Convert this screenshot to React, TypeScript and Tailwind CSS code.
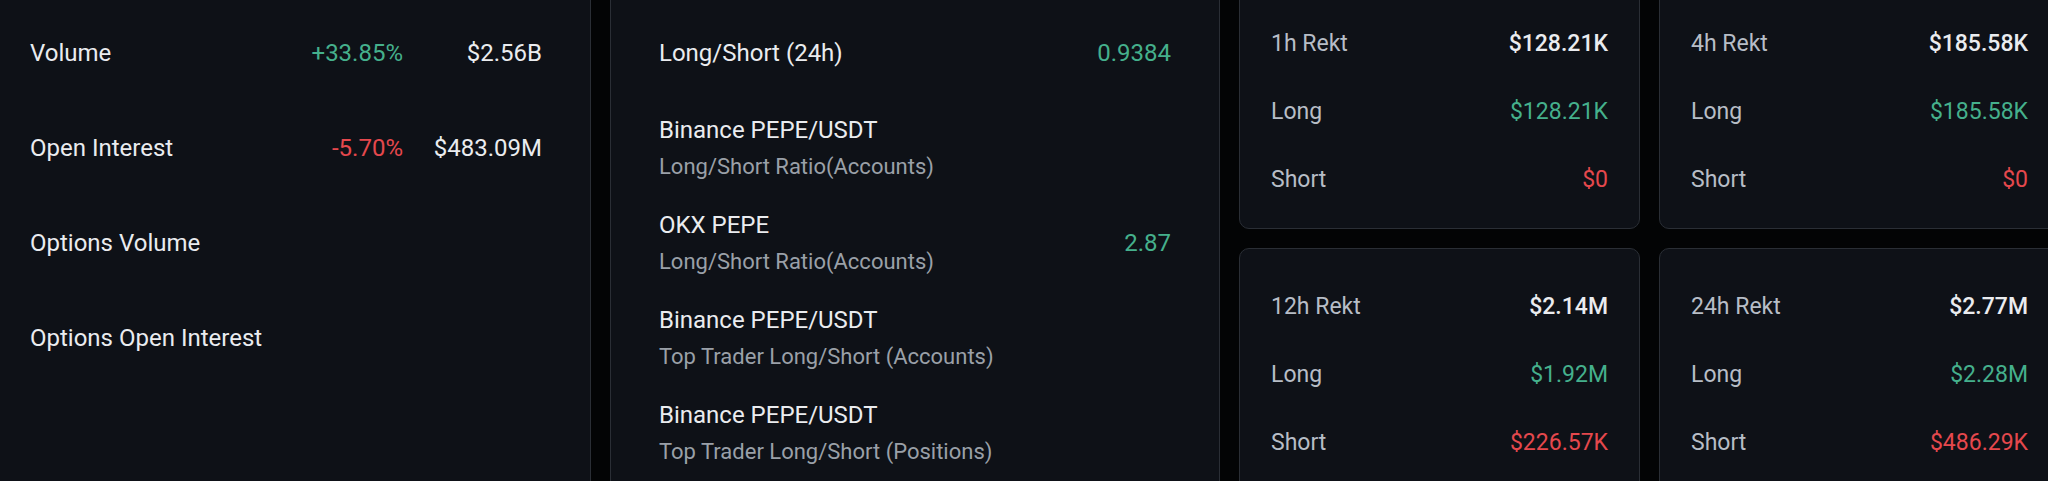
import React from 'react';

const GREEN = 'text-[#45b08c]';
const RED = 'text-[#e5484d]';

interface MarketRow {
  label: string;
  change?: string;
  up?: boolean;
  value?: string;
}

const marketRows: MarketRow[] = [
  { label: 'Volume', change: '+33.85%', up: true, value: '$2.56B' },
  { label: 'Open Interest', change: '-5.70%', up: false, value: '$483.09M' },
  { label: 'Options Volume' },
  { label: 'Options Open Interest' },
];

interface RatioRow {
  title: string;
  subtitle?: string;
  value?: string;
}

const ratioRows: RatioRow[] = [
  { title: 'Long/Short (24h)', value: '0.9384' },
  { title: 'Binance PEPE/USDT', subtitle: 'Long/Short Ratio(Accounts)' },
  { title: 'OKX PEPE', subtitle: 'Long/Short Ratio(Accounts)', value: '2.87' },
  { title: 'Binance PEPE/USDT', subtitle: 'Top Trader Long/Short (Accounts)' },
  { title: 'Binance PEPE/USDT', subtitle: 'Top Trader Long/Short (Positions)' },
];

interface Rekt {
  period: string;
  total: string;
  long: string;
  short: string;
}

const rektLeft: Rekt[] = [
  { period: '1h Rekt', total: '$128.21K', long: '$128.21K', short: '$0' },
  { period: '12h Rekt', total: '$2.14M', long: '$1.92M', short: '$226.57K' },
];

const rektRight: Rekt[] = [
  { period: '4h Rekt', total: '$185.58K', long: '$185.58K', short: '$0' },
  { period: '24h Rekt', total: '$2.77M', long: '$2.28M', short: '$486.29K' },
];

function Panel({ children }: { children: React.ReactNode }) {
  return (
    <div className="w-[610px] shrink-0 -my-[20px] py-[20px] bg-[#0e1117] border border-[#2a2e35] rounded-[10px] px-[48px]">
      <div className="pt-[4px] flex flex-col">{children}</div>
    </div>
  );
}

function RektCard({ data }: { data: Rekt }) {
  return (
    <div className="h-[244px] w-[401px] shrink-0 bg-[#0e1117] border border-[#2a2e35] rounded-[10px] px-[31px] pt-[23px] text-[23px]">
      <div className="flex h-[68px] items-center justify-between">
        <span className="text-[#b7bdc6]">{data.period}</span>
        <span className="text-[#eaecef] font-medium">{data.total}</span>
      </div>
      <div className="flex h-[68px] items-center justify-between">
        <span className="text-[#b7bdc6]">Long</span>
        <span className={GREEN}>{data.long}</span>
      </div>
      <div className="flex h-[68px] items-center justify-between">
        <span className="text-[#b7bdc6]">Short</span>
        <span className={RED}>{data.short}</span>
      </div>
    </div>
  );
}

export default function App() {
  return (
    <div
      className="h-[481px] w-[2048px] overflow-hidden bg-[#030405] text-[24px] leading-none"
      style={{ fontFamily: 'Roboto, "Noto Sans", sans-serif' }}
    >
      <div className="flex gap-[19px] -ml-[19px] h-full">
        <Panel>
          {marketRows.map((r) => (
            <div key={r.label} className="flex h-[95px] items-center">
              <span className="flex-1 text-[#eaecef]">{r.label}</span>
              {r.change && <span className={r.up ? GREEN : RED}>{r.change}</span>}
              {r.value && <span className="w-[139px] text-right text-[#eaecef]">{r.value}</span>}
            </div>
          ))}
        </Panel>

        <Panel>
          {ratioRows.map((r, i) => (
            <div key={i} className="flex h-[95px] items-center justify-between">
              <div className="flex flex-col gap-[14px]">
                <span className="text-[#eaecef]">{r.title}</span>
                {r.subtitle && <span className="text-[22px] text-[#9aa0a8]">{r.subtitle}</span>}
              </div>
              {r.value && <span className={GREEN}>{r.value}</span>}
            </div>
          ))}
        </Panel>

        <div className="flex gap-[19px] -mt-[15px]">
          <div className="flex flex-col gap-[19px]">
            {rektLeft.map((d) => (
              <RektCard key={d.period} data={d} />
            ))}
          </div>
          <div className="flex flex-col gap-[19px]">
            {rektRight.map((d) => (
              <RektCard key={d.period} data={d} />
            ))}
          </div>
        </div>
      </div>
    </div>
  );
}
